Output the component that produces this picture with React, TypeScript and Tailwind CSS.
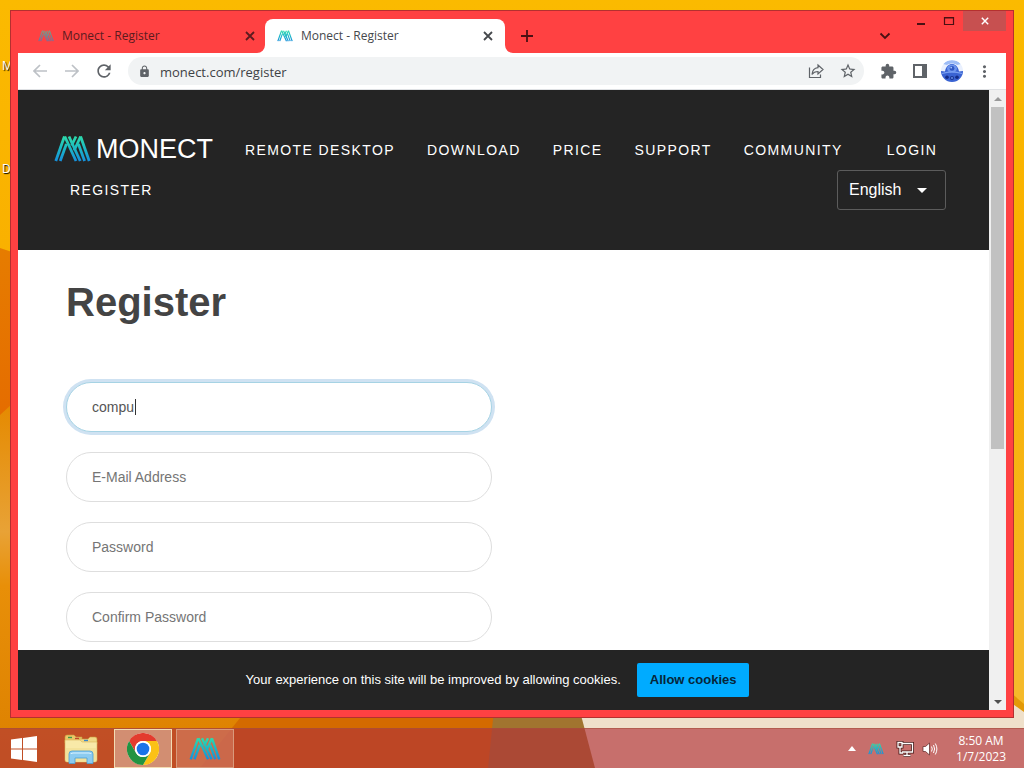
import React, { useState } from 'react';
import { MdExtension, MdLock, MdMoreVert, MdRefresh, MdStarBorder } from 'react-icons/md';

const navLinks = ['Remote Desktop', 'Download', 'Price', 'Support', 'Community'];

const MonectLogo: React.FC<{ id: string; className?: string }> = ({ id, className }) => (
  <svg viewBox="0 0 37 28" className={className} aria-hidden="true">
    <defs>
      <linearGradient id={id} gradientUnits="userSpaceOnUse" x1="0" y1="0" x2="0" y2="26">
        <stop offset="0" stopColor="#2fe0a8" />
        <stop offset="0.5" stopColor="#1cb9c4" />
        <stop offset="1" stopColor="#1590dc" />
      </linearGradient>
    </defs>
    <g stroke={`url(#${id})`} strokeWidth="2.8" fill="none">
      <path d="M1.8 26 10.4 1.5" />
      <path d="M6.2 26 12.4 9" />
      <path d="M10.8 1.5 22 26" />
      <path d="M15 1.5 26.2 26" />
      <path d="M17.6 10.5 22 1.5" />
      <path d="M20.2 15.5 26.6 1.5" />
      <path d="M26.6 1.5 35.2 26" />
      <path d="M24.4 9 30.6 26" />
    </g>
  </svg>
);

const Wallpaper: React.FC = () => (
  <svg
    className="absolute inset-0 h-full w-full"
    viewBox="0 0 1024 768"
    preserveAspectRatio="none"
    aria-hidden="true"
  >
    <defs>
      <linearGradient id="sky" x1="0" y1="0" x2="0" y2="1">
        <stop offset="0" stopColor="#fbba00" />
        <stop offset="0.35" stopColor="#f9b000" />
        <stop offset="1" stopColor="#f3bb30" />
      </linearGradient>
      <linearGradient id="dune" x1="0" y1="0" x2="0" y2="1">
        <stop offset="0" stopColor="#e67c00" />
        <stop offset="1" stopColor="#e45c00" />
      </linearGradient>
      <linearGradient id="sand" x1="0" y1="0" x2="0" y2="1">
        <stop offset="0" stopColor="#e58a00" />
        <stop offset="0.35" stopColor="#e8a236" />
        <stop offset="0.5" stopColor="#e88f08" />
        <stop offset="1" stopColor="#dc8000" />
      </linearGradient>
    </defs>
    <rect width="1024" height="768" fill="url(#sky)" />
    <path d="M0 248 L12 252 L200 600 L0 600 Z" fill="url(#dune)" />
    <path d="M0 415 L12 404 L300 768 L0 768 Z" fill="url(#sand)" />
    <path d="M240 718 H500 V768 H200 Z" fill="#d46a00" />
    <path d="M495 700 H578 L596 768 H488 Z" fill="#a1742f" />
    <path d="M577 700 H1024 V768 H595 Z" fill="#efe0ca" />
    <path d="M1010 600 H1024 V706 L1010 692 Z" fill="#f5ba2a" />
    <path d="M1010 692 L1024 704 V712 L1010 702 Z" fill="#e39a08" />
  </svg>
);

const CloseIcon: React.FC<{ className?: string }> = ({ className }) => (
  <svg viewBox="0 0 10 10" className={className} aria-hidden="true">
    <path d="M1 1 9 9 M9 1 1 9" stroke="currentColor" strokeWidth="1.8" fill="none" />
  </svg>
);

const Tab: React.FC<{ title: string; active?: boolean }> = ({ title, active }) => (
  <div
    className={
      active
        ? 'relative flex w-60 items-center rounded-t-lg bg-white pl-3 pr-2.5 text-[#45484c]'
        : 'relative flex w-[239px] items-center pl-3 pr-2 text-[#5c1b1f]'
    }
  >
    {active && (
      <>
        <svg className="absolute -left-2 bottom-0 h-2 w-2" viewBox="0 0 8 8" aria-hidden="true">
          <path d="M8 0 V8 H0 A8 8 0 0 0 8 0 Z" fill="#fff" />
        </svg>
        <svg className="absolute -right-2 bottom-0 h-2 w-2" viewBox="0 0 8 8" aria-hidden="true">
          <path d="M0 0 V8 H8 A8 8 0 0 1 0 0 Z" fill="#fff" />
        </svg>
      </>
    )}
    <MonectLogo
      id={active ? 'tab-active' : 'tab-idle'}
      className={active ? 'h-3 w-4' : 'h-3 w-4 opacity-60'}
    />
    <span className="ml-2 flex-1 truncate text-xs">{title}</span>
    <button type="button" aria-label="Close tab" className="p-0.5">
      <CloseIcon className="h-2.5 w-2.5" />
    </button>
  </div>
);

const TitleBar: React.FC = () => (
  <div className="flex h-[42px] justify-between">
    <div className="flex pl-2 pt-2">
      <Tab title="Monect - Register" />
      <Tab title="Monect - Register" active />
      <button type="button" aria-label="New tab" className="ml-2 w-7 pl-2 text-[#4a1013]">
        <svg viewBox="0 0 12 12" className="h-3 w-3" aria-hidden="true">
          <path d="M6 0 V12 M0 6 H12" stroke="currentColor" strokeWidth="1.8" />
        </svg>
      </button>
    </div>
    <div className="flex items-start text-[#4a1013]">
      <button type="button" aria-label="Search tabs" className="mr-3.5 mt-[18px] p-0.5">
        <svg viewBox="0 0 12 8" className="h-2.5 w-3" aria-hidden="true">
          <path d="M1.5 1.5 6 6 10.5 1.5" stroke="currentColor" strokeWidth="1.8" fill="none" />
        </svg>
      </button>
      <button type="button" aria-label="Minimize" className="flex h-5 w-7 items-center justify-center">
        <svg viewBox="0 0 12 10" className="h-2.5 w-3" aria-hidden="true">
          <path d="M2 8 H10" stroke="currentColor" strokeWidth="2" />
        </svg>
      </button>
      <button type="button" aria-label="Maximize" className="flex h-5 w-7 items-center justify-center">
        <svg viewBox="0 0 12 10" className="h-2.5 w-3" aria-hidden="true">
          <path d="M1.5 1.5 H10.5 V8.5 H1.5 Z M1 2 H11" stroke="currentColor" strokeWidth="1.2" fill="none" />
        </svg>
      </button>
      <button
        type="button"
        aria-label="Close"
        className="flex h-5 w-[43px] items-center justify-center bg-[#c75050] text-white"
      >
        <CloseIcon className="h-2 w-2" />
      </button>
    </div>
  </div>
);

const toolButton = 'flex h-8 w-8 shrink-0 items-center justify-center text-[#5f6368]';

const Toolbar: React.FC = () => {
  const [url, setUrl] = useState('monect.com/register');

  return (
    <div className="flex h-[37px] items-center border-b border-[#dfe1e4] bg-white px-1.5">
      <button type="button" aria-label="Back" className={toolButton}>
        <svg viewBox="0 0 14 14" className="h-3.5 w-3.5 text-[#bdc1c6]" aria-hidden="true">
          <path d="M14 7 H1.5 M7 1 1 7 7 13" stroke="currentColor" strokeWidth="1.7" fill="none" />
        </svg>
      </button>
      <button type="button" aria-label="Forward" className={toolButton}>
        <svg viewBox="0 0 14 14" className="h-3.5 w-3.5 text-[#bdc1c6]" aria-hidden="true">
          <path d="M0 7 H12.5 M7 1 13 7 7 13" stroke="currentColor" strokeWidth="1.7" fill="none" />
        </svg>
      </button>
      <button type="button" aria-label="Reload" className={toolButton}>
        <MdRefresh size={20} />
      </button>
      <div className="mx-2 flex h-7 flex-1 items-center rounded-full bg-[#f1f3f4]">
        <span className="flex w-8 justify-center text-[#5f6368]">
          <MdLock size={13} />
        </span>
        <input
          type="text"
          aria-label="Address"
          value={url}
          onChange={(e) => setUrl(e.target.value)}
          className="h-7 min-w-0 flex-1 bg-transparent pt-0.5 text-[13px] text-[#3f4246] outline-none"
        />
        <button type="button" aria-label="Share" className={toolButton}>
          <svg viewBox="0 0 16 16" className="h-4 w-4" fill="none" stroke="currentColor" strokeWidth="1.2" aria-hidden="true">
            <path d="M1.5 4.5 V14.5 H12.5 V11.5" />
            <path d="M10 2 15 6.5 10 11 V8.5 C7 8.5 5.3 9.5 4 11.5 C4.3 7.5 6.3 5 10 4.6 Z" />
          </svg>
        </button>
        <button type="button" aria-label="Bookmark" className={toolButton}>
          <MdStarBorder size={18} />
        </button>
      </div>
      <button type="button" aria-label="Extensions" className={toolButton}>
        <MdExtension size={17} />
      </button>
      <button type="button" aria-label="Side panel" className={toolButton}>
        <svg viewBox="0 0 14 14" className="h-3.5 w-3.5" aria-hidden="true">
          <path d="M1 1 H13 V13 H1 Z" stroke="currentColor" strokeWidth="2" fill="none" />
          <path d="M9 1 H13 V13 H9 Z" fill="currentColor" />
        </svg>
      </button>
      <button type="button" aria-label="Profile" className={toolButton}>
        <svg viewBox="0 0 22 22" className="h-[22px] w-[22px]" aria-hidden="true">
          <clipPath id="avatar">
            <circle cx="11" cy="11" r="11" />
          </clipPath>
          <g clipPath="url(#avatar)">
            <rect width="22" height="22" fill="#e9f0fe" />
            <path d="M2 4 C6 -1 16 -1 20 4 L16 5 C13 3 9 3 6 5 Z" fill="#9dbcf6" />
            <path d="M0 11 L4 11.5 C5 6 8 4 11 4 C14 4 17 6 18 11.5 L22 11 V22 H0 Z" fill="#3a63d2" />
            <ellipse cx="11" cy="8.6" rx="5" ry="4" fill="#6b93ec" />
            <circle cx="11" cy="8.4" r="2.4" fill="#3158c4" />
            <circle cx="10.2" cy="7.6" r="0.9" fill="#a9c4fa" />
            <path d="M1 13.5 C7 11.5 15 11.5 21 13.5" stroke="#7ba1f2" strokeWidth="1.3" fill="none" />
            <circle cx="6" cy="17.2" r="1.8" fill="#152c86" />
            <circle cx="11" cy="18" r="2" fill="#1a348f" />
            <circle cx="16" cy="17.2" r="1.8" fill="#152c86" />
            <circle cx="11" cy="18" r="0.9" fill="#6d97f0" />
          </g>
        </svg>
      </button>
      <button type="button" aria-label="Menu" className={toolButton}>
        <MdMoreVert size={19} />
      </button>
    </div>
  );
};

const navItem = 'flex h-10 items-center px-4 text-sm uppercase tracking-widest text-white';

const SiteHeader: React.FC = () => (
  <header className="bg-[#242424] py-10 pl-9 pr-8">
    <nav className="flex flex-wrap items-center">
      <a href="#home" className="mr-4 flex h-10 items-center pb-0.5 text-white">
        <MonectLogo id="brand" className="h-7 w-[37px]" />
        <span className="ml-[5px] text-[27px] leading-9">MONECT</span>
      </a>
      {navLinks.map((label) => (
        <a key={label} href="#nav" className={navItem}>
          {label}
        </a>
      ))}
      <a href="#login" className={`ml-3 ${navItem}`}>
        Login
      </a>
      <a href="#register" className={navItem}>
        Register
      </a>
      <div className="relative ml-auto mr-[11px]">
        <select
          aria-label="Language"
          defaultValue="English"
          className="h-10 w-[109px] appearance-none rounded-[3px] border border-[#5c5c5c] bg-transparent pl-[11px] text-base text-white"
        >
          <option>English</option>
        </select>
        <svg
          viewBox="0 0 10 5"
          className="pointer-events-none absolute right-[19px] top-[18px] h-[5px] w-2.5"
          aria-hidden="true"
        >
          <path d="M0 0 H10 L5 5 Z" fill="#fff" />
        </svg>
      </div>
    </nav>
  </header>
);

const inputBase =
  'h-[50px] w-full rounded-full border bg-white px-[25px] text-sm text-[#555] placeholder-[#757575] outline-none';

const RegisterForm: React.FC = () => {
  const [name, setName] = useState('compu');

  return (
    <main className="min-h-0 flex-1 overflow-hidden bg-white px-12 pt-7">
      <h1 className="text-[40px] font-bold leading-12 text-[#444]">Register</h1>
      <form className="mt-14 flex max-w-[426px] flex-col gap-5">
        <div className="relative">
          <input
            type="text"
            aria-label="Name"
            value={name}
            onChange={(e) => setName(e.target.value)}
            className={`${inputBase} border-[#a6d3e4] ring-3 ring-[#cfe2f2]`}
          />
          {/* Text cursor */}
          <span className="absolute left-[69px] top-[17px] h-4 w-px bg-[#333]" />
        </div>
        <input type="email" aria-label="E-Mail Address" placeholder="E-Mail Address" className={`${inputBase} border-[#dedede]`} />
        <input type="password" aria-label="Password" placeholder="Password" className={`${inputBase} border-[#dedede]`} />
        <input type="password" aria-label="Confirm Password" placeholder="Confirm Password" className={`${inputBase} border-[#dedede]`} />
      </form>
    </main>
  );
};

const CookieBar: React.FC = () => (
  <div className="flex h-[60px] shrink-0 items-center justify-center gap-4 bg-[#242424] pr-3">
    <p className="text-[13px] text-white">Your experience on this site will be improved by allowing cookies.</p>
    <button type="button" className="h-[34px] rounded-xs bg-[#00abff] px-[13px] text-[13px] font-bold text-[#06263a]">
      Allow cookies
    </button>
  </div>
);

const ScrollBar: React.FC = () => (
  <div className="flex w-[17px] shrink-0 flex-col items-center bg-[#f0f0f0]">
    <span className="flex h-[17px] shrink-0 items-center">
      <svg viewBox="0 0 8 4" className="h-1 w-2" aria-hidden="true">
        <path d="M0 4 H8 L4 0 Z" fill="#999" />
      </svg>
    </span>
    <div className="w-full flex-1 px-0.5">
      <div className="h-7/12 bg-[#c1c1c1]" />
    </div>
    <span className="flex h-[17px] shrink-0 items-center">
      <svg viewBox="0 0 8 4" className="h-1 w-2" aria-hidden="true">
        <path d="M0 0 H8 L4 4 Z" fill="#505050" />
      </svg>
    </span>
  </div>
);

const BrowserWindow: React.FC = () => (
  <div className="relative flex min-h-0 flex-1 flex-col border border-[#b5302f] bg-[#ff4142] px-[7px] pb-[7px]">
    <TitleBar />
    <Toolbar />
    <div className="flex min-h-0 flex-1 font-['Liberation_Sans',Arial,sans-serif]">
      <div className="flex min-w-0 flex-1 flex-col">
        <SiteHeader />
        <RegisterForm />
        <CookieBar />
      </div>
      <ScrollBar />
    </div>
  </div>
);

const taskButton = 'flex h-[39px] w-[58px] items-center justify-center';

const Taskbar: React.FC = () => (
  <footer className="relative flex h-10 shrink-0 items-center justify-between border-t border-[#a5503c]/60 bg-[#b03239]/65">
    <div className="flex items-center gap-1">
      <button type="button" aria-label="Start" className="flex h-[39px] w-12 items-center justify-center">
        <svg viewBox="0 0 26 26" className="h-[26px] w-[26px]" fill="#fff" aria-hidden="true">
          <path d="M0 3.6 11 2.1 V12.4 H0 Z M12 1.9 26 0 V12.4 H12 Z M0 13.5 H11 V23.9 L0 22.4 Z M12 13.5 H26 V26 L12 24.1 Z" />
        </svg>
      </button>
      <button type="button" aria-label="File Explorer" className={taskButton}>
        <svg viewBox="0 0 34 30" className="h-[30px] w-[34px]" aria-hidden="true">
          <path d="M1 3 Q1 1 3 1 H10 L12 3 H18 V9 H1 Z" fill="#e9c768" stroke="#c99c3a" strokeWidth="0.6" />
          <path d="M15 5 H24 L26 3 H31 Q33 3 33 5 V10 H15 Z" fill="#f0d987" stroke="#c99c3a" strokeWidth="0.6" />
          <path d="M4 3.5 H8" stroke="#3d9a4a" strokeWidth="1.4" />
          <path d="M11 4.5 H15" stroke="#c2452e" strokeWidth="1.4" />
          <path d="M20 6.5 H24" stroke="#3a86c8" strokeWidth="1.4" />
          <path d="M1 6 H16 L18 8 H33 V26 Q33 28 31 28 H3 Q1 28 1 26 Z" fill="#f8e9a8" stroke="#d8b65a" strokeWidth="0.6" />
          <path d="M2 14 H32 V26 Q32 27.5 30 27.5 H4 Q2 27.5 2 26 Z" fill="#f3e29a" />
          <path d="M5 29.5 V20 Q5 17 8 17 H26 Q29 17 29 20 V29.5 H23 V24 H11 V29.5 Z" fill="#8ccbf0" stroke="#4a9fd4" strokeWidth="0.8" />
          <path d="M7 20 Q7 19 9 19 H25 Q27 19 27 20" stroke="#d8f1ff" strokeWidth="1.2" fill="none" />
        </svg>
      </button>
      <button type="button" aria-label="Google Chrome" className={`${taskButton} border border-[#f3dcb4] bg-[#dcb09b]/65`}>
        <svg viewBox="0 0 48 48" className="h-8 w-8" aria-hidden="true">
          <circle cx="24" cy="24" r="24" fill="#fff" />
          <path d="M24 12 H44.8 A24 24 0 0 0 3.2 12 L13.6 30 A12 12 0 0 1 24 12 Z" fill="#e33b2e" />
          <path d="M34.4 30 24 48 A24 24 0 0 0 44.8 12 H24 A12 12 0 0 1 34.4 30 Z" fill="#fbc116" />
          <path d="M13.6 30 3.2 12 A24 24 0 0 0 24 48 L34.4 30 A12 12 0 0 1 13.6 30 Z" fill="#229342" />
          <circle cx="24" cy="24" r="12" fill="#fff" />
          <circle cx="24" cy="24" r="9.5" fill="#1a73e8" />
        </svg>
      </button>
      <button type="button" aria-label="Monect" className={`${taskButton} border border-[#d99a7c] bg-[#d98a70]/50`}>
        <MonectLogo id="task" className="h-6 w-8" />
      </button>
    </div>
    <div className="flex items-center pr-[18px] text-white">
      <button type="button" aria-label="Show hidden icons" className="mr-3">
        <svg viewBox="0 0 8 5" className="h-[5px] w-2" aria-hidden="true">
          <path d="M0 5 H8 L4 0 Z" fill="#fff" />
        </svg>
      </button>
      <MonectLogo id="tray" className="mr-3 h-3 w-4" />
      <svg viewBox="0 0 18 16" className="mr-2 h-4 w-[18px]" aria-hidden="true">
        <path d="M6 2.5 H16.5 V11 H6 M11 11 V14 M7.5 14.5 H14.5" stroke="#4a1d1b" strokeWidth="3" fill="none" />
        <path d="M2 1.5 H6 V6 H2 Z M4 6 V12 H7" stroke="#4a1d1b" strokeWidth="3" fill="none" />
        <path d="M6 2.5 H16.5 V11 H6 M11 11 V14 M7.5 14.5 H14.5" stroke="#fff" strokeWidth="1.3" fill="none" />
        <path d="M2 1.5 H6 V6 H2 Z M4 6 V12 H7" stroke="#fff" strokeWidth="1.3" fill="none" />
      </svg>
      <svg viewBox="0 0 16 14" className="mr-[18px] h-3.5 w-4" aria-hidden="true">
        <path d="M1 4.5 H3.5 L7.5 1 V13 L3.5 9.5 H1 Z" fill="#fff" stroke="#5a2422" strokeWidth="0.7" />
        <path d="M9.5 4.5 Q11 7 9.5 9.5 M11.5 3 Q13.7 7 11.5 11 M13.3 1.5 Q16.5 7 13.3 12.5" stroke="#fff" strokeWidth="1" fill="none" />
      </svg>
      <div className="text-center text-xs leading-4">
        <p>8:50 AM</p>
        <p>1/7/2023</p>
      </div>
    </div>
  </footer>
);

const App: React.FC = () => {
  return (
    <div className="relative flex h-screen flex-col overflow-hidden font-['Open_Sans','Noto_Sans',sans-serif]">
      <Wallpaper />
      <div className="relative flex min-h-0 flex-1 flex-col px-2.5 pb-2.5 pt-2.5">
        {/* Desktop icon labels, mostly hidden behind the window */}
        <span className="absolute left-0.5 top-[58px] text-xs text-white text-shadow-[1px_1px_1px_#000]">M</span>
        <span className="absolute left-0.5 top-[161px] text-xs text-white text-shadow-[1px_1px_1px_#000]">D</span>
        <BrowserWindow />
      </div>
      <Taskbar />
    </div>
  );
};

export default App;
